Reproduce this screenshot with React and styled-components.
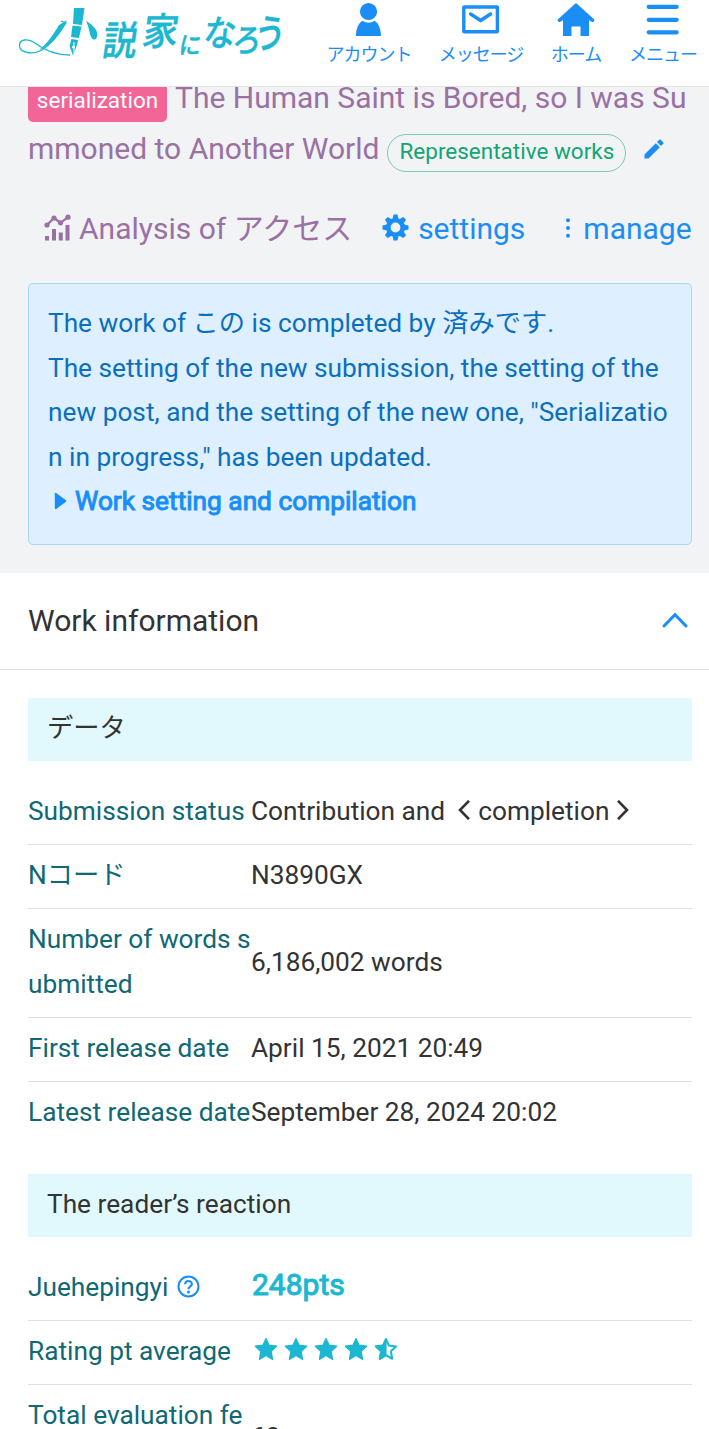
import React from "react";
import styled, { createGlobalStyle } from "styled-components";

const blue = "#1b8ef5";
const purple = "#9a71a3";
const cyan = "#1cb7d0";

const GlobalStyle = createGlobalStyle`
  *, *::before, *::after { box-sizing: border-box; }
  html, body { margin: 0; padding: 0; height: 1429px; overflow: hidden; }
  body {
    font-family: Roboto, "Noto Sans CJK JP", sans-serif;
    font-size: 26.25px;
    line-height: 44.7px;
    color: #333;
    background: #fff;
  }
`;

const Page = styled.div`
  width: 709px;
  height: 1429px;
  overflow: hidden;
`;

const Header = styled.header`
  position: relative;
  z-index: 1;
  display: flex;
  justify-content: space-between;
  height: 87px;
  padding-left: 17px;
  background: #fff;
  border-bottom: 1px solid #e3e3e3;
`;

const LogoSvg = styled.svg`
  display: block;
  flex: none;
  font-family: "Noto Sans CJK JP", sans-serif;
  font-weight: 500;
`;

const HeaderNav = styled.nav`
  display: flex;
  gap: 28px;
  padding-right: 12px;
`;

const NavItem = styled.a`
  display: flex;
  flex-direction: column;
  align-items: center;
  width: ${(p) => p.$width}px;
  color: ${blue};
  font-size: 18px;
  line-height: 29px;
  letter-spacing: -1px;
  white-space: nowrap;
  svg { display: block; height: 40px; flex: none; }
`;

const Hero = styled.section`
  display: flex;
  flex-direction: column;
  height: 486px;
  padding: 0 17px 0 28px;
  background: #f1f3f5;
`;

const Title = styled.h1`
  margin: -15px 0 0;
  height: 102px;
  font-size: 30px;
  font-weight: 400;
  line-height: 51px;
  color: ${purple};
  white-space: nowrap;
`;

const StatusBadge = styled.span`
  display: inline-block;
  width: 139px;
  height: 42px;
  margin-right: 8px;
  border-radius: 5px;
  background: #f26596;
  color: #fff;
  font-size: 22.5px;
  line-height: 40px;
  text-align: center;
`;

const WorksTag = styled.span`
  display: inline-block;
  width: 239px;
  height: 38px;
  margin: 0 18px 0 8px;
  border: 1px solid #7ccdb2;
  border-radius: 19px;
  color: #12a573;
  font-size: 22.5px;
  line-height: 32px;
  text-align: center;
`;

const Tools = styled.nav`
  display: flex;
  align-items: center;
  height: 51px;
  margin-top: 29px;
  padding-left: 16px;
  font-size: 30px;
  line-height: 51px;
  white-space: nowrap;
  svg { margin-top: -2px; }
`;

const Tool = styled.a`
  display: flex;
  align-items: center;
  gap: ${(p) => p.$gap}px;
  margin-left: ${(p) => p.$offset || 0}px;
  color: ${(p) => (p.$visited ? purple : blue)};
`;

const Notice = styled.div`
  height: 262px;
  margin: 29px 0 0;
  padding: 17px 19px;
  border: 1px solid #a9d7f8;
  border-radius: 5px;
  background: #def0ff;
  color: #0b6fc0;
  p { margin: 0; white-space: nowrap; }
`;

const NoticeLink = styled.a`
  display: flex;
  align-items: center;
  gap: 8px;
  height: 44px;
  padding-left: 6px;
  color: ${blue};
  svg { margin-top: -2px; }
`;

const Strong = styled.span`
  font-size: ${(p) => p.$size}px;
  -webkit-text-stroke: 1px currentColor;
`;

const Accordion = styled.button`
  display: flex;
  align-items: center;
  justify-content: space-between;
  width: 100%;
  height: 97px;
  padding: 0 21px 0 28px;
  border: 0;
  border-bottom: 1px solid #e0e0e0;
  background: #fff;
  color: #333;
  font: inherit;
  font-size: 30px;
  svg { margin-top: -3px; }
`;

const Details = styled.section`
  padding: 28px 17px 0 28px;
`;

const SubHeading = styled.h3`
  height: 63px;
  margin: 0 0 19.4px;
  padding: 8px 19px 0;
  background: #e1f9fc;
  font-size: inherit;
  font-weight: 400;
`;

const DataList = styled.dl`
  margin: 0 0 27.4px;
`;

const Row = styled.div`
  display: grid;
  grid-template-columns: 223px 1fr;
  align-items: center;
  min-height: 64.3px;
  padding: 8.2px 0 10.4px;
  border-bottom: 1px solid ${(p) => (p.$last ? "transparent" : "#e0e0e0")};
  white-space: nowrap;
  dd { margin: 0; display: flex; align-items: center; }
  dt { color: #0f6873; }
`;

const Points = styled.span`
  display: block;
  margin: -2px 0 0 1px;
  color: ${cyan};
`;

const Bracket = styled.svg`
  margin: ${(p) => (p.$close ? "-2px 0 0 8px" : "-2px 8px 0 13px")};
`;

const HelpIcon = styled.svg`
  margin-left: 9px;
  vertical-align: -2px;
`;

const Stars = styled.span`
  display: flex;
  gap: 6px;
  padding: 0 0 5px 3px;
`;

const STAR =
  "M12 1.5 15.1 8.2 22.7 9.2 17.2 14.4 18.6 22.4 12 18.6 5.4 22.4 6.8 14.4 1.3 9.2 8.9 8.2Z";

function Star({ half }) {
  return (
    <svg width="24" height="24" viewBox="0 0 24 24" fill={cyan} stroke={cyan} strokeLinejoin="round" strokeWidth="1.2">
      {half ? (
        <>
          <path d="M12 1.5V18.6L5.4 22.4 6.8 14.4 1.3 9.2 8.9 8.2Z" />
          <path d={STAR} fill="none" strokeWidth="2.2" transform="translate(.8 .8) scale(.935)" />
        </>
      ) : (
        <path d={STAR} />
      )}
    </svg>
  );
}

function Logo() {
  return (
    <LogoSvg width="276" height="68" viewBox="17 0 276 68" fill={cyan}>
      <path d="M61 21 66 23C59 34 52 44 42 50C33 55 20 53 19.5 46C19 39 28 38 35 43C44 50 54 55 70 55" fill="none" stroke={cyan} strokeWidth="1.3" />
      <path d="M59 25 67 20C60 35 51 46 39 50C47 44 53 35 59 25Z" />
      <path d="M74 8H84.5L82 25 73 24Z" />
      <path d="M72.5 25.5 81.5 26.5 79 38 71 37Z" />
      <path d="M71.5 39 78 40 77 45 73 55.5 69.5 46Z" />
      <path d="M74 42V54" stroke="#fff" strokeWidth="1" />
      <circle cx="73.5" cy="47" r="1.5" fill="#fff" />
      <path d="M86 21C93 25 99 31 97 37C95 42 91 39 90 34C89 29 88 25 86 21Z" />
      <g stroke={cyan} strokeWidth="0.4">
        <text fontSize="40" transform="translate(101 55) skewX(-8) scale(.86 1)">説</text>
        <text fontSize="38" transform="translate(141 45) skewX(-8) scale(.94 1)">家</text>
        <text fontSize="24" transform="translate(178 54) skewX(-8) scale(.92 1)">に</text>
        <text fontSize="36" transform="translate(202 45.5) skewX(-8) scale(.9 1)">な</text>
        <text fontSize="33" transform="translate(231 52) skewX(-8) scale(.88 1)">ろ</text>
        <text fontSize="40" transform="translate(252 47.5) skewX(-8) scale(.8 1)">う</text>
      </g>
    </LogoSvg>
  );
}

export default function App() {
  return (
    <Page>
      <GlobalStyle />
      <Header>
        <Logo />
        <HeaderNav>
          <NavItem $width={84}>
            <svg width="28" viewBox="0 0 28 40" fill="currentColor">
              <circle cx="13.5" cy="11.5" r="8.6" />
              <path d="M1 36C1 29 3.5 23 7.5 20.8Q13.5 24.8 19.5 20.8C23.5 23 26 29 26 36Z" />
            </svg>
            アカウント
          </NavItem>
          <NavItem $width={84}>
            <svg width="38" viewBox="0 0 38 40" fill="none" stroke="currentColor" strokeWidth="3.4" strokeLinejoin="round" strokeLinecap="round">
              <rect x="1.8" y="7" width="33.6" height="24.8" rx="0.5" />
              <path d="M8.6 14 18.6 20.5 28.6 14" />
            </svg>
            メッセージ
          </NavItem>
          <NavItem $width={50}>
            <svg width="40" viewBox="0 0 40 40" fill="currentColor">
              <path d="M20 3 38 19.2A1.8 1.8 0 0 1 36 22L33 20V36H24.5V26.5H15.5V36H7V20L4 22A1.8 1.8 0 0 1 2 19.2Z" />
            </svg>
            ホーム
          </NavItem>
          <NavItem $width={68}>
            <svg width="34" viewBox="0 0 34 40" stroke="currentColor" strokeWidth="4.2" strokeLinecap="round">
              <path d="M2.7 6.8H30.7M2.7 19.8H30.7M2.7 32.3H30.7" />
            </svg>
            メニュー
          </NavItem>
        </HeaderNav>
      </Header>

      <Hero>
        <Title>
          <StatusBadge>serialization</StatusBadge>
          The Human Saint is Bored, so I was Su
          <br />
          mmoned to Another World
          <WorksTag>Representative works</WorksTag>
          <svg width="20" height="20" viewBox="0 0 20 20" fill={blue}>
            <path d="M.5 15.5 11.8 4.2 15.8 8.2 4.5 19.5H.5Z" />
            <path d="M13 3 15.3.7Q16 .1 16.7.7L19.3 3.3Q19.9 4 19.3 4.7L17 7Z" />
          </svg>
        </Title>
        <Tools>
          <Tool $visited $gap={8}>
            <svg width="27" height="27" viewBox="0 0 27 27" fill="currentColor">
              <path d="M1 22H5V26.5H1ZM8 15H12V26.5H8ZM14.8 18.5H18.8V26.5H14.8ZM21.5 11H25.5V26.5H21.5Z" />
              <path d="M3 11 10 4 16.5 8.8 24 3.2" fill="none" stroke="currentColor" strokeWidth="2.3" />
              <circle cx="3" cy="11" r="2.6" />
              <circle cx="10" cy="4" r="2.6" />
              <circle cx="16.5" cy="8.8" r="2.6" />
              <circle cx="24" cy="3.2" r="2.6" />
            </svg>
            Analysis of アクセス
          </Tool>
          <Tool $gap={9} $offset={30}>
            <svg width="27" height="27" viewBox="-13.5 -13.5 27 27" fill="none" stroke="currentColor">
              <circle r="7.2" strokeWidth="4.6" />
              {[0, 45, 90, 135, 180, 225, 270, 315].map((a) => (
                <path key={a} d="M-3-8.5-2-13H2L3-8.5Z" fill="currentColor" stroke="none" transform={`rotate(${a})`} />
              ))}
            </svg>
            settings
          </Tool>
          <Tool $gap={12} $offset={40}>
            <svg width="6" height="20" viewBox="0 0 6 20" fill="currentColor">
              <circle cx="3" cy="2.3" r="2" />
              <circle cx="3" cy="10" r="2" />
              <circle cx="3" cy="17.7" r="2" />
            </svg>
            manage
          </Tool>
        </Tools>
        <Notice>
          <p>The work of この is completed by 済みです.</p>
          <p>The setting of the new submission, the setting of the</p>
          <p>new post, and the setting of the new one, "Serializatio</p>
          <p>n in progress," has been updated.</p>
          <NoticeLink>
            <svg width="13" height="18" viewBox="0 0 13 18" fill="currentColor">
              <path d="M.8 1.8Q.8.1 2.2 1L12 8.2Q12.9 9 12 9.8L2.2 17Q.8 17.9.8 16.2Z" />
            </svg>
            <Strong $size={26.25}>Work setting and compilation</Strong>
          </NoticeLink>
        </Notice>
      </Hero>

      <Accordion>
        Work information
        <svg width="26" height="16" viewBox="0 0 26 16" fill="none" stroke={blue} strokeWidth="3" strokeLinecap="round">
          <path d="M2 14 13 2.6 24 14" />
        </svg>
      </Accordion>

      <Details>
        <SubHeading>データ</SubHeading>
        <DataList>
          <Row>
            <dt>Submission status</dt>
            <dd>
              Contribution and
              <Bracket width="12" height="20" viewBox="0 0 12 20" fill="none" stroke="#333" strokeWidth="2.6">
                <path d="M11 .8 2 10 11 19.2" />
              </Bracket>
              completion
              <Bracket $close width="12" height="20" viewBox="0 0 12 20" fill="none" stroke="#333" strokeWidth="2.6">
                <path d="M1 .8 10 10 1 19.2" />
              </Bracket>
            </dd>
          </Row>
          <Row>
            <dt>Nコード</dt>
            <dd>N3890GX</dd>
          </Row>
          <Row>
            <dt>Number of words s<br />ubmitted</dt>
            <dd>6,186,002 words</dd>
          </Row>
          <Row>
            <dt>First release date</dt>
            <dd>April 15, 2021 20:49</dd>
          </Row>
          <Row $last>
            <dt>Latest release date</dt>
            <dd>September 28, 2024 20:02</dd>
          </Row>
        </DataList>

        <SubHeading>The reader’s reaction</SubHeading>
        <DataList>
          <Row>
            <dt>
              Juehepingyi
              <HelpIcon width="23" height="23" viewBox="0 0 23 23" fill="none" stroke={blue} strokeWidth="2">
                <circle cx="11.5" cy="11.5" r="10" />
                <path d="M8.2 9.2C8.2 5 14.8 5 14.8 9C14.8 11.5 11.5 11.5 11.5 14.2" strokeWidth="2.2" />
                <circle cx="11.5" cy="17" r="1.5" fill={blue} stroke="none" />
              </HelpIcon>
            </dt>
            <dd>
              <Points>
                <Strong $size={30}>248pts</Strong>
              </Points>
            </dd>
          </Row>
          <Row>
            <dt>Rating pt average</dt>
            <dd>
              <Stars><Star /><Star /><Star /><Star /><Star half /></Stars>
            </dd>
          </Row>
          <Row $last>
            <dt>Total evaluation fe<br />e</dt>
            <dd>62</dd>
          </Row>
        </DataList>
      </Details>
    </Page>
  );
}
